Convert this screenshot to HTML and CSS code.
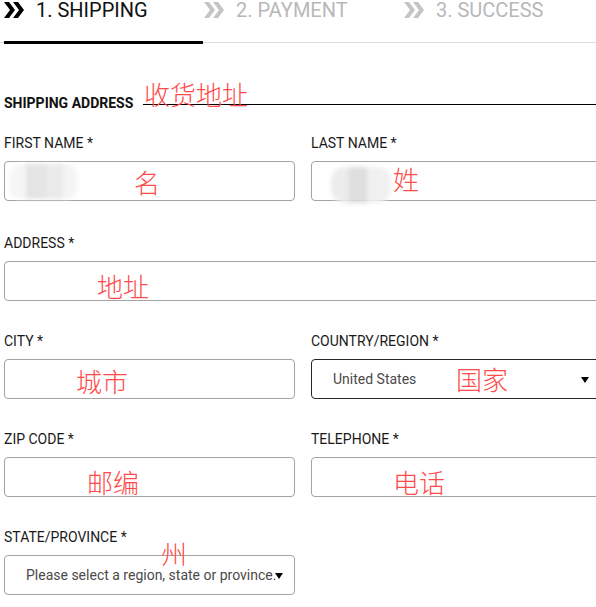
FILE: index.html
```html
<!DOCTYPE html>
<html lang="en">
<head>
<meta charset="utf-8">
<title>Checkout - Shipping</title>
<link rel="stylesheet" href="styles.css">
</head>
<body>
<div class="page">
  <nav class="tabs">
    <div class="tab active">
      <svg class="chev" viewBox="0 0 20 16" width="20" height="16"><path d="M0 0H5L11 8L5 16H0L6 8Z"/><path d="M9 0H14L20 8L14 16H9L15 8Z"/></svg>
      <span>1. SHIPPING</span>
    </div>
    <div class="tab">
      <svg class="chev" viewBox="0 0 20 16" width="20" height="16"><path d="M0 0H5L11 8L5 16H0L6 8Z"/><path d="M9 0H14L20 8L14 16H9L15 8Z"/></svg>
      <span>2. PAYMENT</span>
    </div>
    <div class="tab last">
      <svg class="chev" viewBox="0 0 20 16" width="20" height="16"><path d="M0 0H5L11 8L5 16H0L6 8Z"/><path d="M9 0H14L20 8L14 16H9L15 8Z"/></svg>
      <span>3. SUCCESS</span>
    </div>
  </nav>

  <h2 class="section-title">SHIPPING ADDRESS</h2>

  <form class="form">
    <div class="field">
      <label class="label">FIRST NAME *</label>
      <div class="input"><span class="blur blur-a"></span></div>
    </div>
    <div class="field">
      <label class="label">LAST NAME *</label>
      <div class="input"><span class="blur blur-b"></span></div>
    </div>
    <div class="field wide">
      <label class="label">ADDRESS *</label>
      <div class="input"></div>
    </div>
    <div class="field">
      <label class="label">CITY *</label>
      <div class="input"></div>
    </div>
    <div class="field">
      <label class="label">COUNTRY/REGION *</label>
      <div class="input select dark"><span class="value">United States</span><span class="caret"></span></div>
    </div>
    <div class="field">
      <label class="label">ZIP CODE *</label>
      <div class="input"></div>
    </div>
    <div class="field">
      <label class="label">TELEPHONE *</label>
      <div class="input"></div>
    </div>
    <div class="field">
      <label class="label">STATE/PROVINCE *</label>
      <div class="input select"><span class="value">Please select a region, state or province.</span><span class="caret"></span></div>
    </div>
  </form>

  <span class="note n-title">收货地址</span>
  <span class="note n-first">名</span>
  <span class="note n-last">姓</span>
  <span class="note n-addr">地址</span>
  <span class="note n-city">城市</span>
  <span class="note n-country">国家</span>
  <span class="note n-zip">邮编</span>
  <span class="note n-tel">电话</span>
  <span class="note n-state">州</span>
</div>
</body>
</html>
```

FILE: styles.css
```css
html, body {
  margin: 0;
  padding: 0;
  background: #fff;
  overflow: hidden;
}

.page {
  position: relative;
  width: 598px;
  padding-left: 4px;
  font-family: Roboto, "Liberation Sans", "Noto Sans CJK SC", sans-serif;
  color: #222;
}

/* Tabs */
.tabs {
  display: flex;
  align-items: flex-start;
  height: 42px;
  border-bottom: 1px solid #dcdcdc;
  margin-left: -4px;
  padding-left: 4px;
}

.tab {
  flex: none;
  width: 199px;
  height: 42px;
  display: flex;
  align-items: flex-start;
  gap: 12px;
  font-size: 20px;
  line-height: 20px;
  color: #b8b8b8;
  white-space: nowrap;
}

.tab.last {
  width: 190px;
}

.tab + .tab {
  padding-left: 1px;
}

.tab .chev {
  margin-top: 2px;
  fill: #c4c4c4;
  flex: none;
}

.tab.active {
  color: #111;
  height: 41px;
  border-bottom: 3px solid #000;
}

.tab.active .chev {
  fill: #000;
}

/* Section title */
.section-title {
  display: flex;
  align-items: center;
  margin: 52px 0 0;
  font-size: 14px;
  line-height: 17px;
  font-weight: 700;
  color: #111;
}

.section-title::after {
  content: "";
  flex: 1;
  height: 1px;
  background: #000;
  margin-left: 10px;
  margin-top: 1px;
}

/* Form */
.form {
  display: grid;
  grid-template-columns: 291px 291px;
  column-gap: 16px;
  row-gap: 32px;
  margin-top: 23px;
}

.field.wide {
  grid-column: 1 / -1;
  margin-top: 2px;
}

.label {
  display: block;
  font-size: 14px;
  line-height: 17px;
  color: #1a1a1a;
  margin-bottom: 9px;
}

.input {
  position: relative;
  box-sizing: border-box;
  height: 40px;
  border: 1px solid #a3a3a3;
  border-radius: 4px;
  display: flex;
  align-items: center;
  padding-left: 21px;
  padding-right: 12px;
  overflow: visible;
}

.input.dark {
  border-color: #262626;
}

.select .value {
  font-size: 14px;
  color: #4a4a4a;
  white-space: nowrap;
}

.select .caret {
  position: absolute;
  right: 12px;
  top: 17px;
  width: 0;
  height: 0;
  border-left: 4.5px solid transparent;
  border-right: 4.5px solid transparent;
  border-top: 6px solid #000;
}

.field:last-child .select .caret {
  right: 11px;
}

/* blurred masks */
.blur {
  position: absolute;
  filter: blur(2px);
}

.blur-a {
  left: 4px;
  top: 2px;
  width: 68px;
  height: 35px;
  background:
    linear-gradient(90deg, #f6f6f6 0 25%, #e4e4e4 25% 55%, #eaeaea 55% 80%, #f4f4f4 80% 100%);
  border-radius: 12px;
}

.blur-b {
  left: 19px;
  top: 5px;
  width: 60px;
  height: 36px;
  background:
    linear-gradient(90deg, #ececec 0 30%, #dedede 30% 60%, #f0f0f0 60% 100%);
  border-radius: 14px;
}

/* red annotations */
.note {
  position: absolute;
  font-family: "Noto Sans CJK SC", sans-serif;
  font-size: 26px;
  line-height: 26px;
  color: #ff4a4a;
  font-weight: 300;
  white-space: nowrap;
}

.n-title   { left: 144px; top: 81px; }
.n-first   { left: 134px; top: 169px; }
.n-last    { left: 393px; top: 166px; }
.n-addr    { left: 97px;  top: 273px; }
.n-city    { left: 76px;  top: 368px; }
.n-country { left: 456px; top: 366px; }
.n-zip     { left: 87px;  top: 469px; }
.n-tel     { left: 393px; top: 469px; }
.n-state   { left: 161px; top: 540px; }
```
